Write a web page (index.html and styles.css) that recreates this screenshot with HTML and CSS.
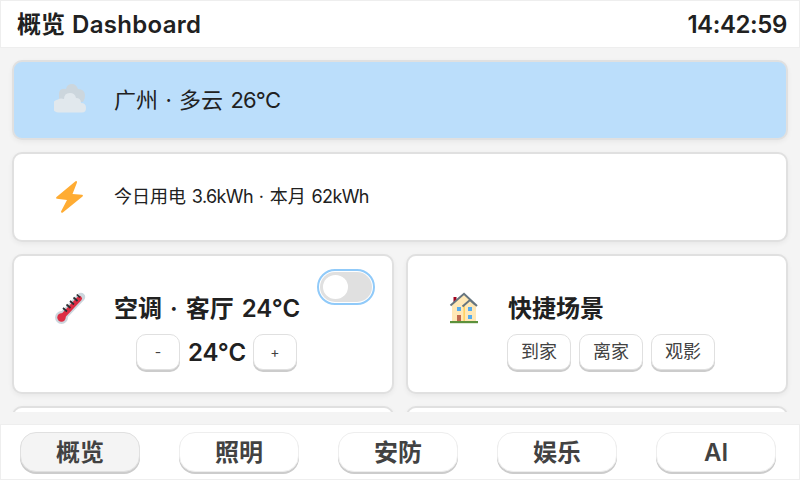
FILE: index.html
```html
<!DOCTYPE html>
<html lang="zh-CN">
<head>
<meta charset="utf-8">
<title>概览 Dashboard</title>
<link rel="stylesheet" href="styles.css">
</head>
<body>
<header class="topbar">
  <h1 class="title">概览 <span class="brand">Dashboard</span></h1>
  <time class="clock">14:42:59</time>
</header>
<main class="content">
  <section class="card weather">
    <svg class="icon" viewBox="0 0 32 32">
      <path fill="#ccd6dd" d="M5 18V10q0-6 7-5 1-5 6-5 4 0 6 5 7 0 7 7 0 3-2 6z"/>
      <path fill="#e1e8ed" d="M5.500 28.500a6 6 0 0 1-1.500-13q2-1.500 6-.5 0-6 6-6 5 0 6 5 5 0 5 5 5 0 5 5 0 4.500-4 4.500z"/>
    </svg>
    <p class="weather-text">广州 · 多云 <span class="temp">26°C</span></p>
  </section>
  <section class="card energy">
    <svg class="icon" viewBox="-1 0 32 32"><path fill="#ffac33" d="M20.500.3 1.500 16q-1 1.500.5 1.800l10 1.200-6 11.500q0 1.700 1.500 1.200L27.500 15.500q1-1.500-.5-1.800L17.500 13 22 1.500Q22-.5 20.500.3z"/></svg>
    <p class="energy-text">今日用电 <span class="kwh">3.6kWh</span> · 本月 <span class="kwh">62kWh</span></p>
  </section>
  <div class="row">
    <section class="card device">
      <svg class="icon" viewBox="0 0 32 32">
        <path stroke="#ccd6dd" stroke-width="8.500" stroke-linecap="round" d="M8 25 27 5"/>
        <circle cx="7.500" cy="25.500" r="6.500" fill="#ccd6dd"/>
        <path stroke="#dd2e44" stroke-width="5" stroke-linecap="round" d="M8 25 25.500 6.500"/>
        <circle cx="7.500" cy="25.500" r="4.200" fill="#dd2e44"/>
        <path stroke="#292f33" stroke-width="1.700" d="m9 16 4 3.500M12.500 12.500l4 3.500M16 9l4 3.500M19.500 5.500l4 3.500M22.800 2.500l3.200 3"/>
      </svg>
      <div class="body">
        <h2 class="name">空调 · 客厅 24°C</h2>
        <div class="controls stepper">
          <button class="btn step">-</button>
          <output class="value">24°C</output>
          <button class="btn step">+</button>
        </div>
      </div>
      <div class="switch"><span class="knob"></span></div>
    </section>
    <section class="card device">
      <svg class="icon" viewBox="0 0 32 32">
        <path fill="#a0041e" d="M5.500 5h3v8h-3z"/>
        <path fill="#ffe8b6" d="M4 13 16 2l12 11v17H4z"/>
        <path fill="#ffcc4d" d="M15.500 14h1.300v16h-1.300z"/>
        <path fill="none" stroke="#66757f" stroke-width="2" d="M2.500 13.500 16 1.800 29 14M14.500 14.500 22 8l5 4.500"/>
        <path fill="#c1694f" d="M9 23h4v7H9z"/>
        <path fill="#55acee" d="M9 15h4v4H9zm11 0h4v4h-4zm0 8h4v4h-4z"/>
        <path fill="#5c913b" d="M2 29h28v2.200H2z"/>
      </svg>
      <div class="body">
        <h2 class="name">快捷场景</h2>
        <div class="controls">
          <button class="btn">到家</button>
          <button class="btn">离家</button>
          <button class="btn">观影</button>
        </div>
      </div>
    </section>
  </div>
  <div class="row">
    <section class="card device"></section>
    <section class="card device"></section>
  </div>
</main>
<nav class="tabs">
  <button class="tab active">概览</button>
  <button class="tab">照明</button>
  <button class="tab">安防</button>
  <button class="tab">娱乐</button>
  <button class="tab">AI</button>
</nav>
</body>
</html>
```

FILE: styles.css
```css
* { box-sizing: border-box; margin: 0; padding: 0; }

body {
  width: 800px;
  height: 480px;
  display: flex;
  flex-direction: column;
  overflow: hidden;
  background: #f4f4f4;
  color: #212121;
  font-family: Inter, "Noto Sans CJK SC", sans-serif;
  white-space: nowrap;
}

button { font-family: inherit; color: #424242; }

.topbar {
  flex: none;
  height: 48px;
  padding: 2px 12px 0 16px;
  display: flex;
  align-items: center;
  justify-content: space-between;
  background: #fff;
  border: 1px solid #eee;
}

.title, .clock { font-size: 24px; line-height: 30px; font-weight: 600; }
.title { word-spacing: 1px; }
.brand { letter-spacing: .3px; }
.clock { letter-spacing: -.4px; }

.content {
  height: 364px;
  flex: none;
  padding: 12px 12px 0;
  display: flex;
  flex-direction: column;
  gap: 12px;
  overflow: hidden;
}

.card {
  flex: none;
  display: flex;
  align-items: center;
  padding: 0 20px 0 40px;
  background: #fff;
  border: 2px solid #e0e0e0;
  border-radius: 10px;
  box-shadow: 0 2px 5px rgba(0, 0, 0, .05);
}

.icon { width: 32px; height: 32px; flex: none; margin-right: 28px; }

.weather { height: 80px; background: #bbdefb; }
.weather-text { font-size: 22px; padding-bottom: 4px; word-spacing: 1.2px; }
.temp { letter-spacing: -.9px; }
.energy { height: 90px; }
.energy-text { font-size: 18px; padding-bottom: 4px; word-spacing: .7px; }
.kwh { letter-spacing: -.6px; }

.row { flex: none; display: grid; grid-template-columns: 382px 382px; gap: 12px; }
.device { height: 140px; align-items: flex-start; }
.device .icon { margin-top: 36px; }

.body { margin-top: 41px; }
.name { font-size: 24px; line-height: 24px; font-weight: 600; word-spacing: 2px; }
.controls { display: flex; align-items: center; gap: 8px; margin: 13px 0 0 -1px; }
.stepper { margin-left: 22px; }

.btn {
  width: 64px;
  height: 36px;
  font-size: 18px;
  line-height: 34px;
  background: #fff;
  border: 1px solid #e0e0e0;
  border-radius: 10px;
  box-shadow: 0 2px 0 #ccc;
}
.step { width: 44px; font-size: 14px; }
.value { width: 57px; padding-top: 2px; text-align: center; font-size: 24px; line-height: 34px; font-weight: 600; }

.switch {
  flex: none;
  width: 52px;
  height: 30px;
  margin: 16px 0 0 auto;
  padding: 3px;
  border-radius: 15px;
  background: #e0e0e0;
  outline: 2px solid #90caf9;
  outline-offset: 1px;
}
.knob { display: block; width: 25px; height: 24px; border-radius: 50%; background: #fff; }

.tabs {
  flex: none;
  height: 56px;
  margin-top: 12px;
  padding: 7px 23px 0 19px;
  display: flex;
  justify-content: space-between;
  background: #fff;
  border: 1px solid #eee;
}

.tab {
  width: 120px;
  height: 40px;
  padding-top: 2px;
  font-size: 24px;
  line-height: 36px;
  font-weight: 600;
  background: #fff;
  border: 1px solid #eee;
  border-radius: 16px;
  box-shadow: 0 2px 0 #ccc;
}
.tab.active { background: #f4f4f4; border-color: #e0e0e0; }
```
